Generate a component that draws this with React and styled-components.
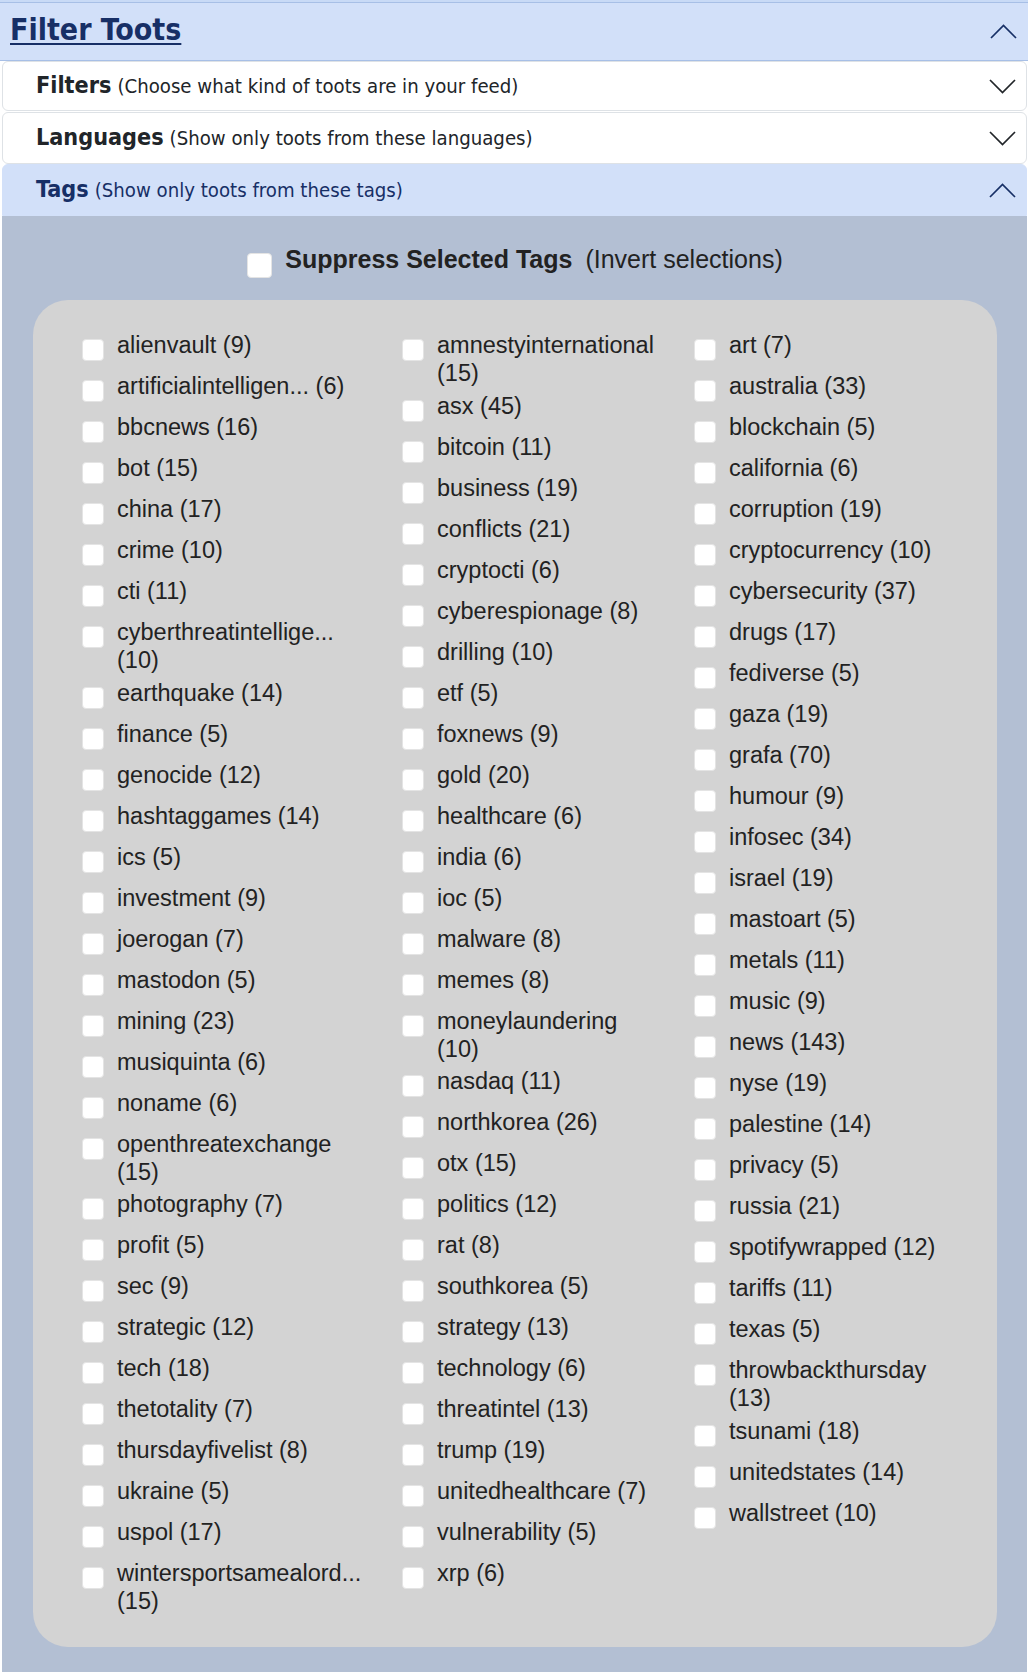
import React from 'react';
import styled, { createGlobalStyle } from 'styled-components';

const GlobalStyle = createGlobalStyle`
  body {
    margin: 0;
    background: #ffffff;
  }
`;

const rowFont = `"DejaVu Sans Condensed", "DejaVu Sans", Verdana, sans-serif`;
const tagFont = `"Liberation Sans", Arial, Helvetica, sans-serif`;

const Card = styled.div`
  width: 1028px;
  box-sizing: border-box;
  background: #c8daf6;
  padding-top: 2px;
`;

const Header = styled.div`
  display: flex;
  align-items: center;
  justify-content: space-between;
  height: 59px;
  box-sizing: border-box;
  padding: 0 11px 0 10px;
  background: #d2e0f9;
  border-top: 1px solid #a7bfe6;
  border-bottom: 1px solid #a7bfe6;
`;

const Title = styled.a`
  font-family: ${rowFont};
  font-weight: bold;
  font-size: 30px;
  color: #172f66;
  text-decoration: underline;
  text-decoration-thickness: 2px;
  text-underline-offset: 3px;
  margin-bottom: 5px;
`;

const Accordion = styled.div`
  padding: 0 1px 2px 2px;
  background: #ffffff;
`;

const ItemHeader = styled.div`
  display: flex;
  align-items: center;
  justify-content: space-between;
  height: ${props => props.$height || 52}px;
  box-sizing: border-box;
  padding: 0 10px 0 33px;
  background: ${props => (props.$open ? '#d2e0f9' : '#ffffff')};
  border: 1px solid ${props => (props.$open ? '#d2e0f9' : '#dee2e6')};
  border-radius: ${props => (props.$open ? '6px 6px 0 0' : '6px')};
  margin-top: ${props => props.$top || 0}px;
  font-family: ${rowFont};
  font-size: 20.2px;
  color: ${props => (props.$open ? '#172f66' : '#212529')};
`;

const ItemLabel = styled.span`
  margin-bottom: 4px;
`;

const ItemTitle = styled.span`
  font-weight: bold;
  font-size: 23.2px;
`;

const ItemNote = styled.span`
  margin-left: 6px;
`;

const Chevron = ({ up, color }) => (
  <svg width="27" height="15" viewBox="0 0 27 15" fill="none">
    <polyline
      points={up ? '1,14 13.5,1.5 26,14' : '1,1 13.5,13.5 26,1'}
      stroke={color}
      strokeWidth="1.7"
      strokeLinejoin="miter"
    />
  </svg>
);

const TagsBody = styled.div`
  background: #b3bfd3;
  padding: 0 30px 25px 31px;
`;

const SuppressRow = styled.label`
  display: flex;
  justify-content: center;
  align-items: flex-start;
  height: 84px;
  box-sizing: border-box;
  padding-top: 29px;
  font-family: ${tagFont};
  font-size: 25px;
  color: #222222;
`;

const Box = styled.span`
  flex: none;
  width: ${props => props.$size}px;
  height: ${props => props.$size}px;
  margin-top: ${props => props.$top}px;
  margin-right: ${props => props.$gap}px;
  box-sizing: border-box;
  background: #ffffff;
  border: 1px solid #e4e4e4;
  border-radius: 4px;
`;

const Strong = styled.b`
  font-weight: bold;
  margin-right: 13px;
`;

const Panel = styled.div`
  display: flex;
  align-items: flex-start;
  background: #d3d3d3;
  border-radius: 35px;
  padding: 31px 0 27px 49px;
`;

const Column = styled.div`
  display: flex;
  flex-direction: column;
  width: ${props => props.$width}px;
  flex: none;
`;

const TagItem = styled.label`
  display: flex;
  align-items: flex-start;
  margin-bottom: 4px;
  min-height: 37px;
  font-family: ${tagFont};
  font-size: 23.5px;
  line-height: 28.3px;
  color: #222222;
`;

const TagText = styled.span`
  width: ${props => props.$text}px;
`;

const columns = [
  {
    width: 320,
    text: 245,
    tags: [
      ['alienvault', 9], ['artificialintelligen...', 6], ['bbcnews', 16], ['bot', 15],
      ['china', 17], ['crime', 10], ['cti', 11], ['cyberthreatintellige...', 10],
      ['earthquake', 14], ['finance', 5], ['genocide', 12], ['hashtaggames', 14],
      ['ics', 5], ['investment', 9], ['joerogan', 7], ['mastodon', 5], ['mining', 23],
      ['musiquinta', 6], ['noname', 6], ['openthreatexchange', 15], ['photography', 7],
      ['profit', 5], ['sec', 9], ['strategic', 12], ['tech', 18], ['thetotality', 7],
      ['thursdayfivelist', 8], ['ukraine', 5], ['uspol', 17], ['wintersportsamealord...', 15],
    ],
  },
  {
    width: 292,
    text: 218,
    tags: [
      ['amnestyinternational', 15], ['asx', 45], ['bitcoin', 11], ['business', 19],
      ['conflicts', 21], ['cryptocti', 6], ['cyberespionage', 8], ['drilling', 10],
      ['etf', 5], ['foxnews', 9], ['gold', 20], ['healthcare', 6], ['india', 6],
      ['ioc', 5], ['malware', 8], ['memes', 8], ['moneylaundering', 10], ['nasdaq', 11],
      ['northkorea', 26], ['otx', 15], ['politics', 12], ['rat', 8], ['southkorea', 5],
      ['strategy', 13], ['technology', 6], ['threatintel', 13], ['trump', 19],
      ['unitedhealthcare', 7], ['vulnerability', 5], ['xrp', 6],
    ],
  },
  {
    width: 300,
    text: 225,
    tags: [
      ['art', 7], ['australia', 33], ['blockchain', 5], ['california', 6],
      ['corruption', 19], ['cryptocurrency', 10], ['cybersecurity', 37], ['drugs', 17],
      ['fediverse', 5], ['gaza', 19], ['grafa', 70], ['humour', 9], ['infosec', 34],
      ['israel', 19], ['mastoart', 5], ['metals', 11], ['music', 9], ['news', 143],
      ['nyse', 19], ['palestine', 14], ['privacy', 5], ['russia', 21],
      ['spotifywrapped', 12], ['tariffs', 11], ['texas', 5], ['throwbackthursday', 13],
      ['tsunami', 18], ['unitedstates', 14], ['wallstreet', 10],
    ],
  },
];

const App = () => {
  return (
    <>
      <GlobalStyle />
      <Card>
        <Header>
          <Title>Filter Toots</Title>
          <Chevron up color="#172f66" />
        </Header>
        <Accordion>
          <ItemHeader $height={50}>
            <ItemLabel>
              <ItemTitle>Filters</ItemTitle>
              <ItemNote>(Choose what kind of toots are in your feed)</ItemNote>
            </ItemLabel>
            <Chevron color="#212529" />
          </ItemHeader>
          <ItemHeader $height={52} $top={1}>
            <ItemLabel>
              <ItemTitle>Languages</ItemTitle>
              <ItemNote>(Show only toots from these languages)</ItemNote>
            </ItemLabel>
            <Chevron color="#212529" />
          </ItemHeader>
          <ItemHeader $open $height={52}>
            <ItemLabel>
              <ItemTitle>Tags</ItemTitle>
              <ItemNote>(Show only toots from these tags)</ItemNote>
            </ItemLabel>
            <Chevron up color="#172f66" />
          </ItemHeader>
          <TagsBody>
            <SuppressRow>
              <Box $size={25} $top={8} $gap={13} />
              <Strong>Suppress Selected Tags</Strong>
              <span>(Invert selections)</span>
            </SuppressRow>
            <Panel>
              {columns.map((col, i) => (
                <Column key={i} $width={col.width}>
                  {col.tags.map(([name, count]) => (
                    <TagItem key={name}>
                      <Box $size={22} $top={8} $gap={13} />
                      <TagText $text={col.text}>
                        {name} ({count})
                      </TagText>
                    </TagItem>
                  ))}
                </Column>
              ))}
            </Panel>
          </TagsBody>
        </Accordion>
      </Card>
    </>
  );
};

export default App;
